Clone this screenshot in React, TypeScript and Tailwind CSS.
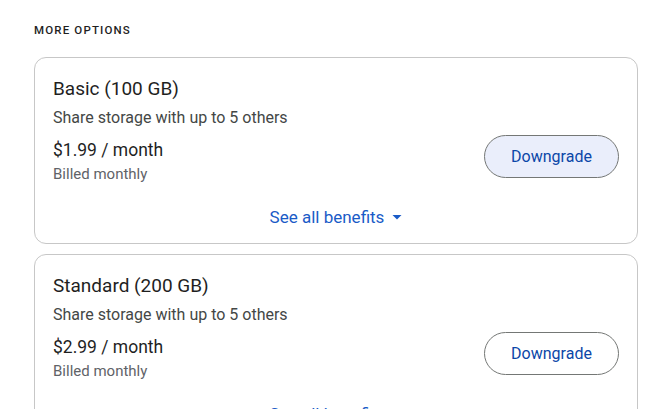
import React from "react";

interface Plan {
  name: string;
  price: string;
  highlighted?: boolean;
}

const plans: Plan[] = [
  { name: "Basic (100 GB)", price: "$1.99 / month", highlighted: true },
  { name: "Standard (200 GB)", price: "$2.99 / month" },
];

function CaretDown() {
  return (
    <svg className="w-[10px] h-[10px] ml-[8px]" viewBox="0 0 10 10" fill="currentColor">
      <path d="M0.5 3h9L5 7.5z" />
    </svg>
  );
}

function PlanCard({ plan }: { plan: Plan }) {
  return (
    <div className="rounded-[12px] border border-[#c7c7c7] bg-white pt-[18px] pb-[14px] px-[18px]">
      <div className="flex items-end justify-between">
        <div className="flex flex-col">
          <p className="text-[19px] leading-[26px] text-[#1f1f1f]">{plan.name}</p>
          <p className="mt-[5px] text-[16px] leading-[22px] text-[#444746]">
            Share storage with up to 5 others
          </p>
          <p className="mt-[9px] text-[17.5px] leading-[24px] text-[#1f1f1f]">{plan.price}</p>
          <p className="mt-[2px] text-[15px] leading-[20px] text-[#5f6368]">Billed monthly</p>
        </div>
        <button
          className={`mb-[6px] h-[43px] w-[135px] rounded-full border border-[#747775] text-[16px] text-[#0b47a8] ${
            plan.highlighted ? "bg-[#eaeefb]" : "bg-white"
          }`}
        >
          Downgrade
        </button>
      </div>
      <div className="mt-[21px] flex items-center justify-center text-[17px] leading-[24px] text-[#1a5bc7]">
        See all benefits
        <CaretDown />
      </div>
    </div>
  );
}

export default function App() {
  return (
    <div className="min-h-screen bg-white pl-[34px] pr-[32px] pt-[22px] font-['Roboto',sans-serif]">
      <p className="text-[11.5px] leading-[16px] font-medium tracking-[0.1em] text-[#1f1f1f]">
        MORE OPTIONS
      </p>
      <div className="mt-[19px] flex flex-col gap-[10px]">
        {plans.map((plan) => (
          <PlanCard key={plan.name} plan={plan} />
        ))}
      </div>
    </div>
  );
}
